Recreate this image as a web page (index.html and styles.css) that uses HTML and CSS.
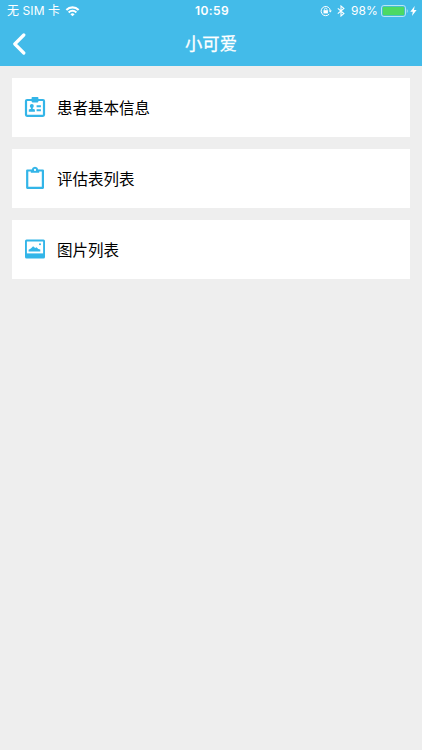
FILE: index.html
```html
<!DOCTYPE html>
<html lang="zh-CN">
<head>
<meta charset="utf-8">
<title>小可爱</title>
<link rel="stylesheet" href="styles.css">
</head>
<body>
<header class="header">
  <div class="status">
    <div class="status-left">
      <span class="carrier">无 SIM 卡</span>
      <svg class="wifi" width="15" height="11" viewBox="0 0 16 12" fill="none" stroke="#fff" stroke-width="2.2">
        <path d="M1.3 4.3a9.4 9.4 0 0 1 13.4 0M3.8 7a6 6 0 0 1 8.4 0"/>
        <path d="M8 11.3 5.7 8.9a3.3 3.3 0 0 1 4.600 0z" fill="#fff" stroke="none"/>
      </svg>
    </div>
    <span class="time">10:59</span>
    <div class="status-right">
      <svg class="lock" width="12" height="12" viewBox="0 0 12 12" fill="none" stroke="#fff">
        <path d="M9.2 9.1a4.6 4.6 0 1 1 1.1-3.5" stroke-width="1"/>
        <path d="M8.6 5.4h3.3l-1.6 2.1z" fill="#fff" stroke="none"/>
        <rect x="3.5" y="5.2" width="4.4" height="3.2" fill="#fff" stroke="none"/>
        <path d="M4.4 5.3V4.5a1.3 1.3 0 0 1 2.6 0v.8" stroke-width=".8"/>
      </svg>
      <svg class="bluetooth" width="8" height="12" viewBox="0 0 8 12" fill="none" stroke="#fff" stroke-width="1.1">
        <path d="m.8 3.3 6.1 5.3L4 11V1l2.900 2.400L.8 8.700"/>
      </svg>
      <span class="percent">98%</span>
      <svg class="battery" width="28" height="12" viewBox="0 0 28 12">
        <rect x=".5" y=".5" width="24" height="11" rx="2.4" fill="none" stroke="#b9e5f7"/>
        <rect x="1.7" y="1.7" width="21.6" height="8.6" rx="1.3" fill="#4cd964"/>
        <path d="M25.800 4v4c1.200-.5 1.200-3.500 0-4z" fill="#b9e5f7"/>
      </svg>
      <svg class="bolt" width="7" height="10" viewBox="0 0 7 10"><path d="M4.700 0 .3 5.700h2.500L2 10l4.600-5.900H4z" fill="#fff"/></svg>
    </div>
  </div>
  <nav class="nav">
    <svg class="back" width="14" height="22" viewBox="0 0 14 22" fill="none" stroke="#fff" stroke-width="3.200" stroke-linecap="round" stroke-linejoin="round"><path d="m11.800 2-9 9 9 9"/></svg>
    <h1 class="title">小可爱</h1>
    <span class="nav-end"></span>
  </nav>
</header>
<main class="list">
  <a class="card">
    <svg class="icon" width="22" height="24" viewBox="0 0 22 24" fill="#33b5e8">
      <rect x="2" y="5" width="18" height="15.800" rx="1" fill="none" stroke="#33b5e8" stroke-width="2.200"/>
      <rect x="7.600" y="2" width="6.800" height="5.400" rx=".8"/>
      <circle cx="7.800" cy="10.900" r="2"/>
      <path d="M7 12h1.700v1.700l2.200.8v2.200H4.800v-2.200l2.200-.8z"/>
      <path d="M12.600 10.300h4.300v2h-4.300zM12.600 14.200h4.300v2h-4.300z"/>
    </svg>
    <span class="label">患者基本信息</span>
  </a>
  <a class="card">
    <svg class="icon" width="22" height="24" viewBox="0 0 22 24" fill="none" stroke="#33b5e8">
      <path d="M7 4.500H3.200v17.300h15.700V4.500H15" stroke-width="2.200" stroke-linejoin="round"/>
      <path d="M6.800 6.800V3.400h.9a3.400 3.400 0 0 1 6.600 0h.9v3.400z" fill="#33b5e8" stroke="none"/>
      <circle cx="11" cy="3.900" r="1.100" fill="#fff" stroke="none"/>
    </svg>
    <span class="label">评估表列表</span>
  </a>
  <a class="card">
    <svg class="icon" width="22" height="24" viewBox="0 0 22 24">
      <rect x="1" y="2.600" width="20" height="19" rx="1.500" fill="#33b5e8"/>
      <path d="M2.900 4.500h16.200v11.900H2.900z" fill="#fff"/>
      <path d="M4.600 14.500v-1.700l2.300-1.200 2.200-2.300 2.100 1.600 1.300-.7 1.800 1.900 2 .5v1.900z" fill="#33b5e8"/>
      <circle cx="16" cy="7.300" r="1" fill="#33b5e8"/>
    </svg>
    <span class="label">图片列表</span>
  </a>
</main>
</body>
</html>
```
FILE: styles.css
```css
* { box-sizing: border-box; }
body {
  margin: 0;
  min-height: 750px;
  background: #eee;
  font-family: Inter, "Noto Sans CJK SC", sans-serif;
}
svg { display: block; flex: none; }
.header {
  height: 65.6px;
  background: #43bbe9;
  color: #fff;
}
.status {
  display: grid;
  grid-template-columns: 1fr auto 1fr;
  align-items: center;
  height: 22px;
  padding: 0 5px 0 7px;
  font-size: 12px;
  line-height: 22px;
}
.status-left, .status-right { display: flex; align-items: center; }
.status-right { justify-content: flex-end; }
.carrier { letter-spacing: .1px; white-space: nowrap; }
.wifi { margin-left: 5px; }
.time { font-weight: 600; letter-spacing: .4px; }
.bluetooth { margin-left: 5px; }
.percent { margin-left: 6px; letter-spacing: .1px; }
.battery { margin-left: 3px; }
.bolt { margin-left: 1px; }
.nav {
  display: grid;
  grid-template-columns: 40px 1fr 40px;
  align-items: center;
  height: 43px;
}
.back { margin-left: 12px; }
.title {
  margin: 0;
  font-size: 17.300px;
  font-weight: 400;
  line-height: 26px;
  text-align: center;
  -webkit-text-stroke: .3px #fff;
}
.list {
  display: flex;
  flex-direction: column;
  gap: 12.200px;
  padding: 12.200px 12.400px;
}
.card {
  display: flex;
  align-items: center;
  height: 58.800px;
  padding-left: 12px;
  background: #fff;
}
.label {
  margin-left: 10.600px;
  padding-top: 3px;
  color: #000;
  font-size: 15.500px;
  line-height: 24px;
}
```
